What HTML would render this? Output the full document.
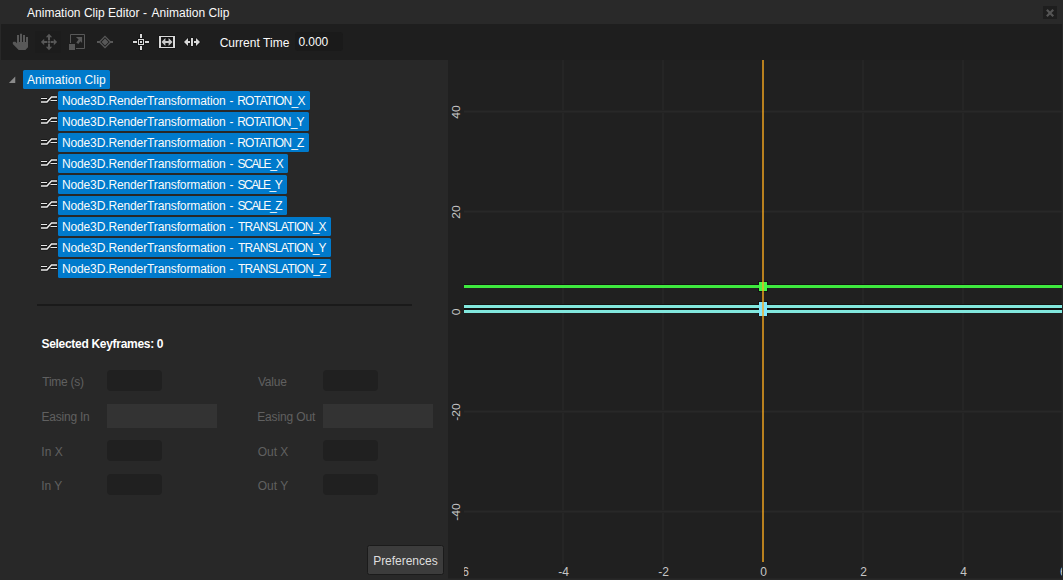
<!DOCTYPE html>
<html>
<head>
<meta charset="utf-8">
<title>Animation Clip Editor</title>
<style>
html,body{margin:0;padding:0;}
body{width:1063px;height:580px;overflow:hidden;background:#282828;font-family:"Liberation Sans",sans-serif;font-size:12px;color:#fafafa;position:relative;}
.abs{position:absolute;}
.t{position:absolute;white-space:pre;line-height:14px;height:14px;}
#titlebar{left:0;top:0;width:1063px;height:24px;background:#292929;}
#toolbar{left:1px;top:24px;width:1061px;height:36px;background:#1e1e1e;}
#closebtn{left:1043px;top:6px;width:14px;height:13px;background:#1e1e1e;}
#hover{left:35px;top:31px;width:26px;height:22px;background:#1c1c1c;}
#timefield{left:294.7px;top:31.8px;width:48.6px;height:19.2px;background:#1a1a1a;border-radius:3px;}
.hl{position:absolute;height:19px;background:#007acc;border-radius:1.5px;}
.field{position:absolute;background:#202020;border-radius:4px;width:55px;height:20.5px;}
.combo{position:absolute;background:#333333;width:110px;height:24px;}
#sep{left:37px;top:304px;width:375px;height:2px;background:#1a1a1a;}
#prefs{left:367px;top:544.5px;width:74.5px;height:28px;border:1px solid #1b1b1b;background:#3c3c3c;border-radius:2.5px;}
#graph{left:448px;top:60px;width:614px;height:518.3px;background:#202020;overflow:hidden;}
#plot{left:16px;top:0;width:598px;height:518.3px;overflow:hidden;}
.vg{position:absolute;top:0;width:2px;height:503.5px;background:#252525;}
.hg{position:absolute;left:0;width:599px;height:1px;background:#282828;box-shadow:0 -1px 0 #232323,0 1px 0 #242424;}
.xl{position:absolute;top:505px;width:40px;text-align:center;color:#c6c6c6;line-height:14px;white-space:nowrap;}
.yl{position:absolute;left:-12.2px;width:40px;height:14px;font-size:12px;text-align:center;color:#c6c6c6;line-height:14px;transform:rotate(-90deg) scaleY(0.94);white-space:nowrap;}
svg{position:absolute;overflow:visible;}
</style>
</head>
<body>
<div id="titlebar" class="abs"></div>
<div class="t" style="left:26.98px;top:6px;letter-spacing:0.023px;">Animation Clip Editor</div>
<div class="t" style="left:142.90px;top:6px;">-</div>
<div class="t" style="left:151.48px;top:6px;letter-spacing:0.041px;">Animation Clip</div>
<div id="closebtn" class="abs"></div>
<svg style="left:1043px;top:6px;" width="14" height="13" viewBox="0 0 14 13"><path d="M3.85 3.8 L10.25 10.2 M10.25 3.8 L3.85 10.2" stroke="#555555" stroke-width="2.2" fill="none"/></svg>
<div id="toolbar" class="abs"></div>
<div id="hover" class="abs"></div>
<svg style="left:0;top:24px;" width="210" height="36" viewBox="0 24 210 36">
<g fill="#585858" stroke="none">
<path d="M17 35H19V42H20V33.8H22V42H23V35H25V42H26V37H28V47.3L25.4 50.1H18.7L12.8 43.9V42.6Q12.8 41.7 13.8 41.7H15.4L17 43.3Z"/>
<path d="M49 33.8L52.2 37.2H45.8ZM48 37H50V40.4H48ZM48 41H50V43H48ZM48 43.6H50V47H48ZM49 50.2L45.8 46.8H52.2ZM40.9 42L44.2 38.8V45.2ZM44 41H47.4V43H44ZM50.6 41H54V43H50.6ZM57.1 42L53.8 38.8V45.2Z"/>
<path d="M69 44H75V50H69Z"/>
<path d="M82.1 36.9L82.1 42.9L80.4 41.2L78.3 44.1L76.3 42.6L78.6 39.6L75.9 37.1Z"/>
<path d="M97 41H100V43H97ZM110 41H113V43H110ZM105 38.5L108.5 42L105 45.5L101.5 42Z"/>
</g>
<g fill="none" stroke="#585858" stroke-width="1">
<path d="M70.5 43V34.5H84.5V48.5H76"/>
<path d="M105 36.4L110.6 42L105 47.6L99.4 42Z" stroke-width="1.3"/>
</g>
<g fill="#151515" stroke="#151515" stroke-width="1.3" stroke-linejoin="round">
<path d="M140 34H142V38H140ZM140 46H142V50H140ZM133 41H137V43H133ZM145 41H149V43H145ZM138 39H144V45H138Z"/>
<path d="M159 36H175V48H159Z"/>
<path d="M191 38H193V46H191ZM184 42L188 38V41H190V43H188V46ZM200 42L196 38V41H194V43H196V46Z"/>
</g>
<g fill="#d8d8d8" stroke="none">
<path d="M140 34H142V38H140ZM140 46H142V50H140ZM133 41H137V43H133ZM145 41H149V43H145ZM140 41H142V43H140Z"/>
<path d="M138 39H144V45H138ZM139 40V44H143V40Z" fill-rule="evenodd"/>
<path d="M159 36H175V48H159ZM161 37V47H173V37Z" fill-rule="evenodd"/>
<path d="M191 38H193V46H191ZM184 42L188 38V41H190V43H188V46ZM200 42L196 38V41H194V43H196V46Z"/>
</g>
<path d="M161.5 42L165.4 37.9V41H168.6V37.9L172.5 42L168.6 46.1V43H165.4V46.1Z" fill="#c8c8c8"/>
</svg>

<div class="t" style="left:219.64px;top:36px;letter-spacing:0.036px;">Current Time</div>
<div id="timefield" class="abs"></div>
<div class="t" style="left:298.47px;top:35px;letter-spacing:-0.064px;">0.000</div>
<svg style="left:9px;top:77px;" width="7" height="7" viewBox="0 0 7 7"><path d="M6.25 -0.4 L6.25 6 L-0.1 6 Z" fill="#8a8a8a"/></svg>
<div class="hl" style="left:23px;top:70px;width:87px;"></div>
<div class="t" style="left:26.98px;top:73px;letter-spacing:0.095px;">Animation Clip</div>
<svg style="left:39px;top:94px;" width="20" height="12" viewBox="39 94 20 12"><path d="M41 98.5H47M50.5 100.5H57" stroke="#151515" stroke-width="2.4" fill="none"/><path d="M41 102H47L51.5 97H57" stroke="#151515" stroke-width="3" fill="none" stroke-linejoin="round"/><path d="M41 98.5H47M50.5 100.5H57" stroke="#e4e4e4" stroke-width="1" fill="none"/><path d="M41 102H47L51.5 97H57" stroke="#ececec" stroke-width="1.5" fill="none"/></svg>
<div class="hl" style="left:58px;top:91px;width:252px;"></div>
<div class="t" style="left:61.88px;top:94px;letter-spacing:-0.121px;">Node3D.RenderTransformation</div>
<div class="t" style="left:229.40px;top:94px;">-</div>
<div class="t" style="left:237.18px;top:94px;letter-spacing:-0.731px;">ROTATION_X</div>
<svg style="left:39px;top:115px;" width="20" height="12" viewBox="39 94 20 12"><path d="M41 98.5H47M50.5 100.5H57" stroke="#151515" stroke-width="2.4" fill="none"/><path d="M41 102H47L51.5 97H57" stroke="#151515" stroke-width="3" fill="none" stroke-linejoin="round"/><path d="M41 98.5H47M50.5 100.5H57" stroke="#e4e4e4" stroke-width="1" fill="none"/><path d="M41 102H47L51.5 97H57" stroke="#ececec" stroke-width="1.5" fill="none"/></svg>
<div class="hl" style="left:58px;top:112px;width:251px;"></div>
<div class="t" style="left:61.88px;top:115px;letter-spacing:-0.121px;">Node3D.RenderTransformation</div>
<div class="t" style="left:229.40px;top:115px;">-</div>
<div class="t" style="left:237.18px;top:115px;letter-spacing:-0.842px;">ROTATION_Y</div>
<svg style="left:39px;top:136px;" width="20" height="12" viewBox="39 94 20 12"><path d="M41 98.5H47M50.5 100.5H57" stroke="#151515" stroke-width="2.4" fill="none"/><path d="M41 102H47L51.5 97H57" stroke="#151515" stroke-width="3" fill="none" stroke-linejoin="round"/><path d="M41 98.5H47M50.5 100.5H57" stroke="#e4e4e4" stroke-width="1" fill="none"/><path d="M41 102H47L51.5 97H57" stroke="#ececec" stroke-width="1.5" fill="none"/></svg>
<div class="hl" style="left:58px;top:133px;width:251px;"></div>
<div class="t" style="left:61.88px;top:136px;letter-spacing:-0.121px;">Node3D.RenderTransformation</div>
<div class="t" style="left:229.40px;top:136px;">-</div>
<div class="t" style="left:237.18px;top:136px;letter-spacing:-0.777px;">ROTATION_Z</div>
<svg style="left:39px;top:157px;" width="20" height="12" viewBox="39 94 20 12"><path d="M41 98.5H47M50.5 100.5H57" stroke="#151515" stroke-width="2.4" fill="none"/><path d="M41 102H47L51.5 97H57" stroke="#151515" stroke-width="3" fill="none" stroke-linejoin="round"/><path d="M41 98.5H47M50.5 100.5H57" stroke="#e4e4e4" stroke-width="1" fill="none"/><path d="M41 102H47L51.5 97H57" stroke="#ececec" stroke-width="1.5" fill="none"/></svg>
<div class="hl" style="left:58px;top:154px;width:230px;"></div>
<div class="t" style="left:61.88px;top:157px;letter-spacing:-0.121px;">Node3D.RenderTransformation</div>
<div class="t" style="left:229.40px;top:157px;">-</div>
<div class="t" style="left:237.50px;top:157px;letter-spacing:-1.316px;">SCALE_X</div>
<svg style="left:39px;top:178px;" width="20" height="12" viewBox="39 94 20 12"><path d="M41 98.5H47M50.5 100.5H57" stroke="#151515" stroke-width="2.4" fill="none"/><path d="M41 102H47L51.5 97H57" stroke="#151515" stroke-width="3" fill="none" stroke-linejoin="round"/><path d="M41 98.5H47M50.5 100.5H57" stroke="#e4e4e4" stroke-width="1" fill="none"/><path d="M41 102H47L51.5 97H57" stroke="#ececec" stroke-width="1.5" fill="none"/></svg>
<div class="hl" style="left:58px;top:175px;width:229px;"></div>
<div class="t" style="left:61.88px;top:178px;letter-spacing:-0.121px;">Node3D.RenderTransformation</div>
<div class="t" style="left:229.40px;top:178px;">-</div>
<div class="t" style="left:237.50px;top:178px;letter-spacing:-1.482px;">SCALE_Y</div>
<svg style="left:39px;top:199px;" width="20" height="12" viewBox="39 94 20 12"><path d="M41 98.5H47M50.5 100.5H57" stroke="#151515" stroke-width="2.4" fill="none"/><path d="M41 102H47L51.5 97H57" stroke="#151515" stroke-width="3" fill="none" stroke-linejoin="round"/><path d="M41 98.5H47M50.5 100.5H57" stroke="#e4e4e4" stroke-width="1" fill="none"/><path d="M41 102H47L51.5 97H57" stroke="#ececec" stroke-width="1.5" fill="none"/></svg>
<div class="hl" style="left:58px;top:196px;width:229px;"></div>
<div class="t" style="left:61.88px;top:199px;letter-spacing:-0.121px;">Node3D.RenderTransformation</div>
<div class="t" style="left:229.40px;top:199px;">-</div>
<div class="t" style="left:237.50px;top:199px;letter-spacing:-1.385px;">SCALE_Z</div>
<svg style="left:39px;top:220px;" width="20" height="12" viewBox="39 94 20 12"><path d="M41 98.5H47M50.5 100.5H57" stroke="#151515" stroke-width="2.4" fill="none"/><path d="M41 102H47L51.5 97H57" stroke="#151515" stroke-width="3" fill="none" stroke-linejoin="round"/><path d="M41 98.5H47M50.5 100.5H57" stroke="#e4e4e4" stroke-width="1" fill="none"/><path d="M41 102H47L51.5 97H57" stroke="#ececec" stroke-width="1.5" fill="none"/></svg>
<div class="hl" style="left:58px;top:217px;width:273px;"></div>
<div class="t" style="left:61.88px;top:220px;letter-spacing:-0.121px;">Node3D.RenderTransformation</div>
<div class="t" style="left:229.40px;top:220px;">-</div>
<div class="t" style="left:237.97px;top:220px;letter-spacing:-0.766px;">TRANSLATION_X</div>
<svg style="left:39px;top:241px;" width="20" height="12" viewBox="39 94 20 12"><path d="M41 98.5H47M50.5 100.5H57" stroke="#151515" stroke-width="2.4" fill="none"/><path d="M41 102H47L51.5 97H57" stroke="#151515" stroke-width="3" fill="none" stroke-linejoin="round"/><path d="M41 98.5H47M50.5 100.5H57" stroke="#e4e4e4" stroke-width="1" fill="none"/><path d="M41 102H47L51.5 97H57" stroke="#ececec" stroke-width="1.5" fill="none"/></svg>
<div class="hl" style="left:58px;top:238px;width:273px;"></div>
<div class="t" style="left:61.88px;top:241px;letter-spacing:-0.121px;">Node3D.RenderTransformation</div>
<div class="t" style="left:229.40px;top:241px;">-</div>
<div class="t" style="left:237.97px;top:241px;letter-spacing:-0.766px;">TRANSLATION_Y</div>
<svg style="left:39px;top:262px;" width="20" height="12" viewBox="39 94 20 12"><path d="M41 98.5H47M50.5 100.5H57" stroke="#151515" stroke-width="2.4" fill="none"/><path d="M41 102H47L51.5 97H57" stroke="#151515" stroke-width="3" fill="none" stroke-linejoin="round"/><path d="M41 98.5H47M50.5 100.5H57" stroke="#e4e4e4" stroke-width="1" fill="none"/><path d="M41 102H47L51.5 97H57" stroke="#ececec" stroke-width="1.5" fill="none"/></svg>
<div class="hl" style="left:58px;top:259px;width:273px;"></div>
<div class="t" style="left:61.88px;top:262px;letter-spacing:-0.121px;">Node3D.RenderTransformation</div>
<div class="t" style="left:229.40px;top:262px;">-</div>
<div class="t" style="left:237.97px;top:262px;letter-spacing:-0.719px;">TRANSLATION_Z</div>
<div id="sep" class="abs"></div>
<div class="t" style="left:41.48px;top:337px;letter-spacing:-0.300px;color:#ffffff;font-weight:bold;">Selected Keyframes: 0</div>
<div class="t" style="left:42.27px;top:375px;letter-spacing:-0.252px;color:#606060;">Time (s)</div>
<div class="t" style="left:257.97px;top:375px;letter-spacing:-0.229px;color:#606060;">Value</div>
<div class="t" style="left:41.48px;top:410px;letter-spacing:-0.220px;color:#606060;">Easing In</div>
<div class="t" style="left:257.18px;top:410px;letter-spacing:-0.140px;color:#606060;">Easing Out</div>
<div class="t" style="left:41.35px;top:445px;letter-spacing:0.056px;color:#606060;">In X</div>
<div class="t" style="left:257.69px;top:445px;color:#606060;">Out X</div>
<div class="t" style="left:41.35px;top:479px;letter-spacing:-0.077px;color:#606060;">In Y</div>
<div class="t" style="left:257.69px;top:479px;letter-spacing:0.028px;color:#606060;">Out Y</div>
<div class="field" style="left:107px;top:370px;"></div>
<div class="field" style="left:323px;top:370px;"></div>
<div class="combo" style="left:107px;top:404px;"></div>
<div class="combo" style="left:323px;top:404px;"></div>
<div class="field" style="left:107px;top:440px;"></div>
<div class="field" style="left:323px;top:440px;"></div>
<div class="field" style="left:107px;top:474px;"></div>
<div class="field" style="left:323px;top:474px;"></div>
<div id="prefs" class="abs"></div>
<div class="t" style="left:373.18px;top:554px;letter-spacing:-0.024px;color:#dedede;">Preferences</div>
<div id="graph" class="abs">
<div class="abs" style="left:613px;top:0;width:1px;height:518px;background:#232323;"></div>
<div id="plot" class="abs">
<div class="vg" style="left:-2px;"></div>
<div class="vg" style="left:98px;"></div>
<div class="vg" style="left:198px;"></div>
<div class="vg" style="left:398px;"></div>
<div class="vg" style="left:498px;"></div>
<div class="vg" style="left:598px;"></div>
<div class="hg" style="top:51px;"></div>
<div class="hg" style="top:151px;"></div>
<div class="hg" style="top:251px;"></div>
<div class="hg" style="top:351px;"></div>
<div class="hg" style="top:451px;"></div>
<div class="abs" style="left:-2.7px;top:224.4px;width:604.4px;height:3.9px;background:#131313;"></div>
<div class="abs" style="left:-2.7px;top:244.3px;width:604.4px;height:4.3px;background:#131313;"></div>
<div class="abs" style="left:-2.7px;top:249.2px;width:604.4px;height:4.3px;background:#131313;"></div>
<div class="abs" style="left:294.2px;top:221.4px;width:9.6px;height:10.2px;background:#131313;"></div>
<div class="abs" style="left:294.2px;top:241.4px;width:9.6px;height:15.0px;background:#131313;"></div>
<div class="abs" style="left:-2px;top:225.1px;width:603px;height:2.5px;background:#3ee93e;"></div>
<div class="abs" style="left:-2px;top:245px;width:603px;height:2.9px;background:#82e8de;"></div>
<div class="abs" style="left:-2px;top:249.9px;width:603px;height:2.9px;background:#82e8de;"></div>
<div class="abs" style="left:294.9px;top:222.1px;width:8.2px;height:8.8px;background:#46f546;"></div>
<div class="abs" style="left:294.9px;top:242.1px;width:8.2px;height:13.6px;background:#80e7ff;"></div>
<div class="abs" style="left:297.9px;top:0;width:2.2px;height:502px;background:rgba(249,169,30,0.7);"></div>
<div class="xl" style="left:-20.5px;">-6</div>
<div class="xl" style="left:79.5px;">-4</div>
<div class="xl" style="left:179.5px;">-2</div>
<div class="xl" style="left:279.5px;">0</div>
<div class="xl" style="left:379.5px;">2</div>
<div class="xl" style="left:479.5px;">4</div>
<div class="xl" style="left:579.4000000000001px;">6</div>
</div>
<div class="yl" style="top:44.5px;">40</div>
<div class="yl" style="top:144.5px;">20</div>
<div class="yl" style="top:244.5px;">0</div>
<div class="yl" style="top:344.5px;">-20</div>
<div class="yl" style="top:444.5px;">-40</div>
</div>
<div class="abs" style="left:448px;top:578px;width:614px;height:1px;background:#242424;"></div>
</body>
</html>
